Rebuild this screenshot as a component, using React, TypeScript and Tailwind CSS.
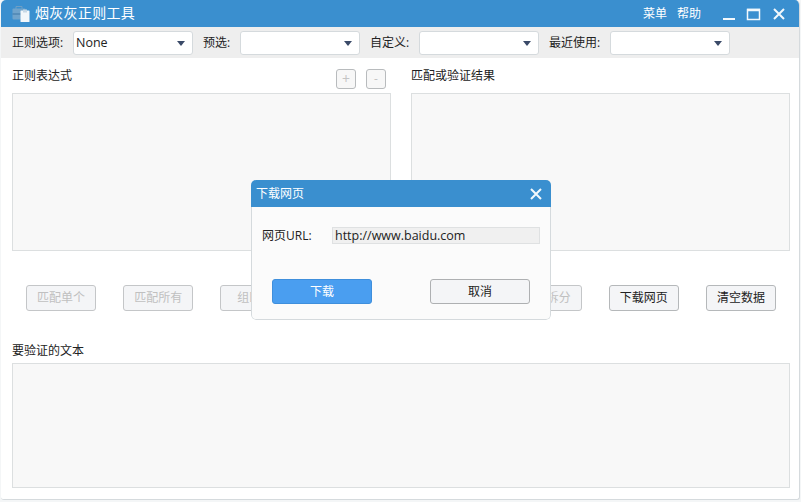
const font = "font-['Open_Sans','Noto_Sans_CJK_SC',sans-serif]";

const Combo = ({ value = "" }: { value?: string }) => (
  <div className="w-[120px] h-6 bg-white border border-[#d5dadd] rounded-[3px] flex items-center justify-between pl-[2px] pr-[7px] text-[12.5px] text-[#222]">
    <span>{value}</span>
    <span className="w-0 h-0 border-x-4 border-x-transparent border-t-[5px] border-t-[#3a4a68]" />
  </div>
);

const ActionButton = ({ label, disabled }: { label: string; disabled?: boolean }) => (
  <button
    className={`w-[70px] h-[26px] rounded-[3px] border border-[#b5b8ba] bg-[#f4f5f7] text-xs ${
      disabled ? "text-[#c0c0c0] border-[#c4c6c8]" : "text-[#222]"
    }`}
  >
    {label}
  </button>
);

// the two empty ones sit fully behind the dialog in the picture
const actions: { label: string; disabled?: boolean }[] = [
  { label: "匹配单个", disabled: true },
  { label: "匹配所有", disabled: true },
  { label: "组匹配", disabled: true },
  { label: "", disabled: true },
  { label: "", disabled: true },
  { label: "正则拆分", disabled: true },
  { label: "下载网页" },
  { label: "清空数据" },
];

export default function App() {
  return (
    <div className={`${font} relative w-[801px] h-[502px] bg-[#f4f6f7] overflow-hidden text-xs text-[#222]`}>
      <div className="ml-px w-[799px] h-[500px] bg-white border-r border-b border-[#d5dadd] rounded-t-[5px] rounded-b-[3px] flex flex-col overflow-hidden">
        {/* title bar */}
        <header className="h-[27px] shrink-0 bg-[#3a8fcf] flex items-center pl-[11px] pr-[12px] text-white">
          <svg width="18" height="18" viewBox="0 0 18 18" className="mr-[5px]">
            <path d="M4 4V1.5h6V4" fill="none" stroke="#6f9fc4" strokeWidth="1" />
            <rect x="0.5" y="3.5" width="13" height="11" rx="1" fill="#6fa3cb" />
            <rect x="0.5" y="8.5" width="13" height="1" fill="#3f78a8" />
            <rect x="8.5" y="5.5" width="9" height="11.5" rx="0.5" fill="#f2f7fb" />
            <rect x="11" y="4.5" width="4" height="3" fill="#c6d8e6" />
          </svg>
          <span className="text-[14px] tracking-[0.3px]">烟灰灰正则工具</span>
          <div className="ml-auto flex items-center">
            <span>菜单</span>
            <span className="ml-[10px]">帮助</span>
            <svg width="66" height="14" viewBox="0 0 66 14" className="ml-[20px]" fill="none" stroke="#f2f8fc" strokeWidth="2">
              <path d="M2 12h12" />
              <rect x="26.5" y="2.5" width="12" height="10" strokeWidth="1.5" />
              <path d="M26 3h13" strokeWidth="2.5" />
              <path d="M53 2l10 10M63 2L53 12" />
            </svg>
          </div>
        </header>

        {/* toolbar */}
        <div className="h-[31px] shrink-0 bg-[#eeeeee] flex items-center pl-[11px] pt-[1px]">
          <span className="w-[61px]">正则选项:</span>
          <Combo value="None" />
          <span className="ml-[10px] w-[37px]">预选:</span>
          <Combo />
          <span className="ml-[10px] w-[49px]">自定义:</span>
          <Combo />
          <span className="ml-[10px] w-[61px]">最近使用:</span>
          <Combo />
        </div>

        {/* regex + result */}
        <div className="flex gap-5 pl-[11px] pr-[9px] pt-[10px]">
          <div className="w-[379px]">
            <div className="h-[25px] flex justify-between pr-[5px]">
              <span className="leading-[16px]">正则表达式</span>
              <div className="flex gap-[10px] pt-[1px]">
                <button className="w-5 h-5 rounded-[3px] border border-[#b8bbbd] bg-[#f7f7f7] text-[#c4c4c4] text-sm leading-none">+</button>
                <button className="w-5 h-5 rounded-[3px] border border-[#b8bbbd] bg-[#f7f7f7] text-[#c4c4c4] leading-none">-</button>
              </div>
            </div>
            <div className="h-[158px] bg-[#f8f8f8] border border-[#dcdfe0]" />
          </div>
          <div className="w-[379px]">
            <div className="h-[25px] leading-[16px]">匹配或验证结果</div>
            <div className="h-[158px] bg-[#f8f8f8] border border-[#dcdfe0]" />
          </div>
        </div>

        {/* actions */}
        <div className="mt-[34px] pl-[25px] pr-[23px] flex justify-between">
          {actions.map((a, i) => (
            <ActionButton key={i} label={a.label} disabled={a.disabled} />
          ))}
        </div>

        {/* text to verify */}
        <div className="mt-[32px] pl-[11px] pr-[9px]">
          <div className="h-[20px] leading-[16px]">要验证的文本</div>
          <div className="h-[125px] bg-[#f8f8f8] border border-[#dcdfe0]" />
        </div>
      </div>

      {/* download dialog */}
      <div className="absolute left-[251px] top-[180px] w-[300px] h-[140px] rounded-[5px] overflow-hidden flex flex-col">
        <div className="h-[27px] shrink-0 bg-[#3a8fcf] flex items-center justify-between pl-[5px] pr-[9px] text-white">
          <span>下载网页</span>
          <svg width="12" height="12" viewBox="0 0 12 12" fill="none" stroke="#f2f8fc" strokeWidth="2">
            <path d="M1 1l10 10M11 1L1 11" />
          </svg>
        </div>
        <div className="flex-1 bg-[#fbfbfb] border-x border-b border-[#d5dadd] rounded-b-[5px]">
          <div className="mt-[20px] ml-[10px] flex items-center">
            <span className="w-[70px]">网页URL:</span>
            <div className="w-[208px] h-[17px] bg-[#f0f0f0] border border-[#dfe1e2] pl-[2px] leading-[15px] text-[12.5px]">
              http://www.baidu.com
            </div>
          </div>
          <div className="mt-[35px] px-5 flex justify-between">
            <button className="w-[100px] h-[25px] rounded-[3px] bg-[#4a9ef0] border border-[#3f8fdc] text-white">下载</button>
            <button className="w-[100px] h-[25px] rounded-[3px] bg-[#f4f5f7] border border-[#aeb0b2] text-[#222]">取消</button>
          </div>
        </div>
      </div>
    </div>
  );
}
